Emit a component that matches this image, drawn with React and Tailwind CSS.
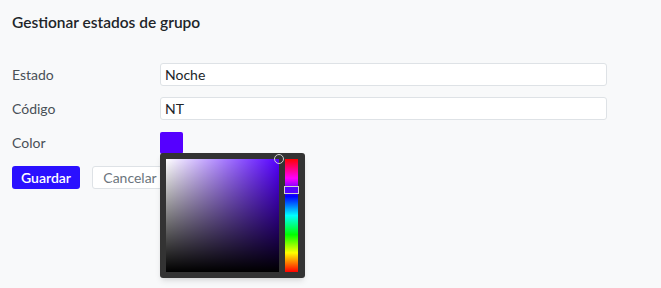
import { useState } from "react";

const FONT = { fontFamily: "Lato, 'Noto Sans', sans-serif" };

function ColorPicker({ hex }) {
  return (
    <div className="absolute left-0 top-[22px] z-10 flex gap-[6px] rounded-[3px] bg-[#333333] py-[6px] pl-[6px] pr-[7px] shadow-md">
      {/* saturation / value square */}
      <div className="relative h-[113px] w-[113px]" style={{ backgroundColor: hex }}>
        <div className="absolute inset-0 bg-linear-to-r from-white to-transparent" />
        <div className="absolute inset-0 bg-linear-to-t from-black to-transparent" />
        <div className="absolute -right-[5px] -top-[5px] h-[10px] w-[10px] rounded-full border border-[#cfcfcf]" />
      </div>
      {/* hue strip */}
      <div className="relative h-[113px] w-[13px] bg-[linear-gradient(to_bottom,#ff0000,#ff00ff_17%,#0000ff_33%,#00ffff_50%,#00ff00_67%,#ffff00_83%,#ff0000)]">
        <div className="absolute -left-[1px] top-[27px] h-[8px] w-[15px] border border-[#d0d0d0] bg-[#5500ff]" />
      </div>
    </div>
  );
}

export default function App() {
  const [estado, setEstado] = useState("Noche");
  const [codigo, setCodigo] = useState("NT");
  const color = "#5500ff";

  return (
    <div className="min-h-[288px] w-full bg-[#f8f9fa] px-3 pt-[11px] text-[#212529]" style={FONT}>
      <h1 className="text-[15.5px] font-semibold leading-[22px]">Gestionar estados de grupo</h1>

      <div className="mt-[30px] grid grid-cols-[148px_447px] gap-y-[11px]">
        <label className="text-[14px] leading-[23px] text-[#495057]">Estado</label>
        <input
          value={estado}
          onChange={(e) => setEstado(e.target.value)}
          className="h-[23px] rounded-[3px] border border-[#dee2e6] bg-white px-1 text-[14px] text-[#212529] outline-none"
          style={FONT}
        />

        <label className="text-[14px] leading-[23px] text-[#495057]">Código</label>
        <input
          value={codigo}
          onChange={(e) => setCodigo(e.target.value)}
          className="h-[23px] rounded-[3px] border border-[#dee2e6] bg-white px-1 text-[14px] text-[#212529] outline-none"
          style={FONT}
        />

        <label className="text-[14px] leading-[23px] text-[#495057]">Color</label>
        <div className="relative h-[23px]">
          <div className="mt-[1px] h-[22px] w-[23px] rounded-[2px] bg-[#5500ff]" />
          <ColorPicker hex={color} />
        </div>
      </div>

      <div className="mt-[12px] flex gap-3">
        <button className="h-[23px] w-[68px] rounded-[3px] bg-[#2a10ff] text-[14px] font-semibold text-white">
          Guardar
        </button>
        <button className="h-[23px] w-[76px] rounded-[3px] border border-[#dee2e6] bg-white text-[14px] text-[#6c757d]">
          Cancelar
        </button>
      </div>
    </div>
  );
}
